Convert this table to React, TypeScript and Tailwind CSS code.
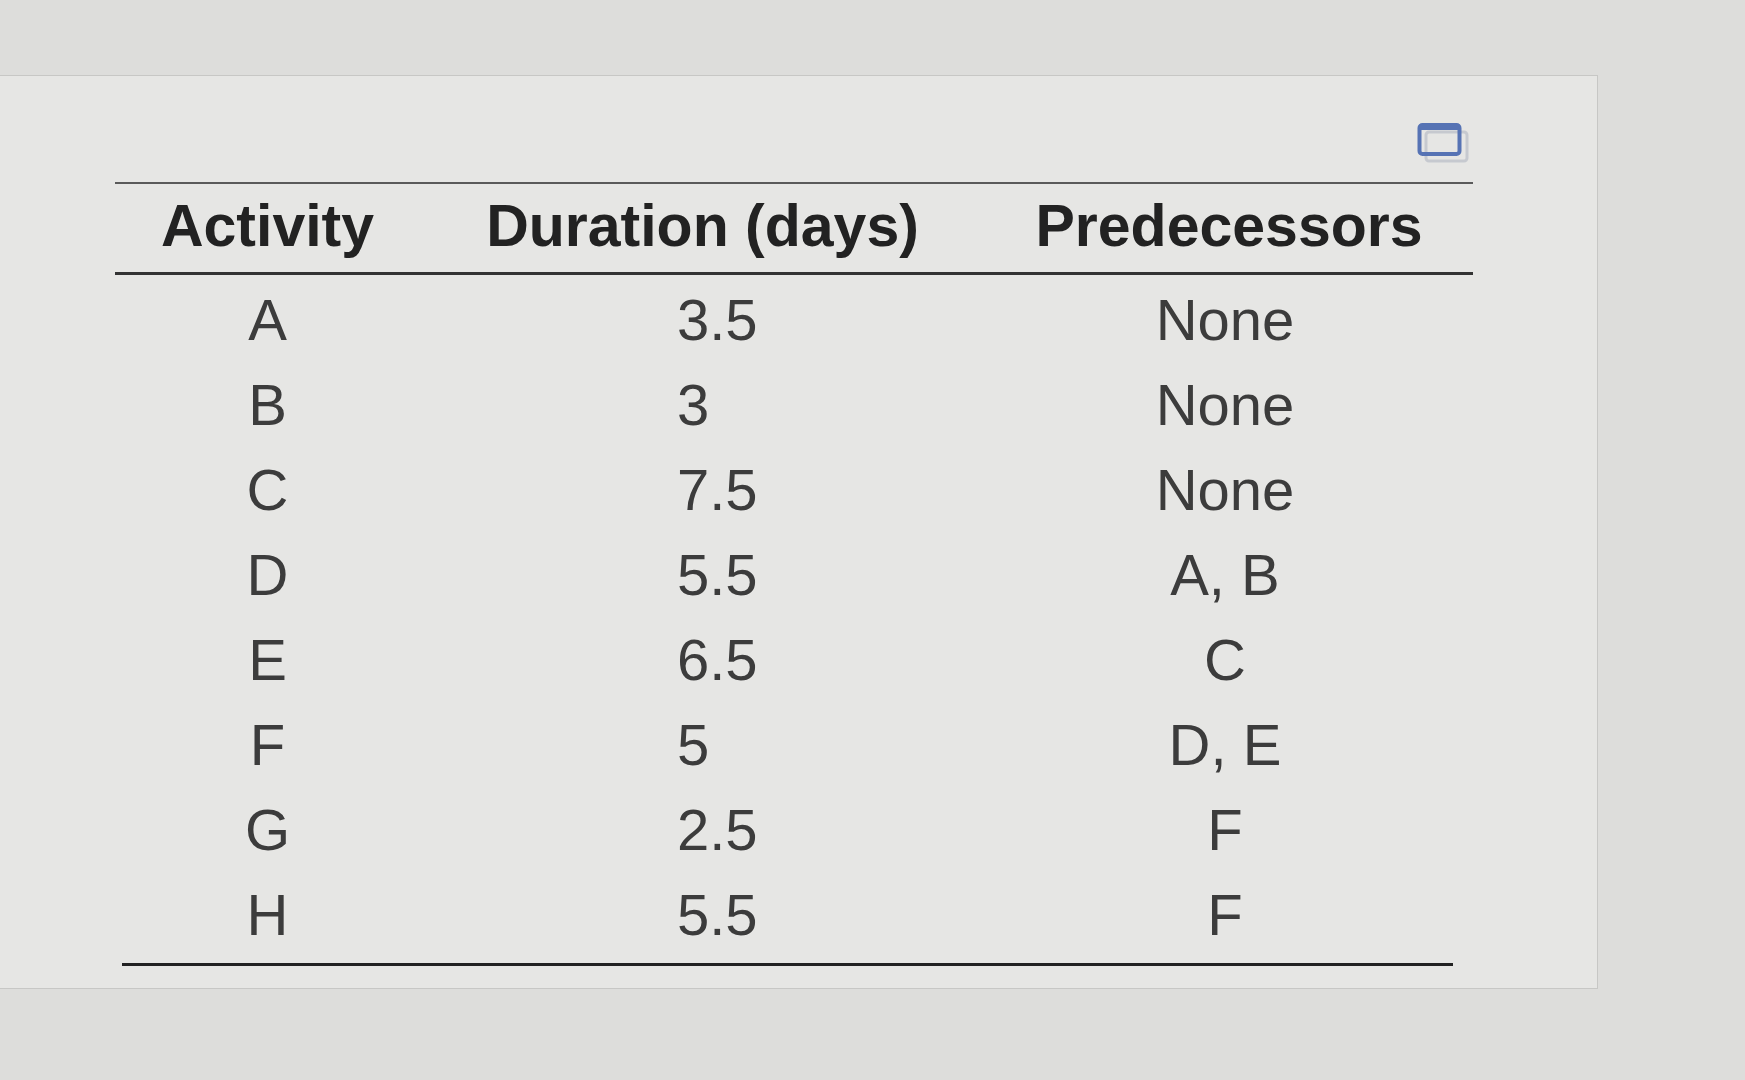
const ROWS: [string, string, string][] = [
  ['A', '3.5', 'None'],
  ['B', '3', 'None'],
  ['C', '7.5', 'None'],
  ['D', '5.5', 'A, B'],
  ['E', '6.5', 'C'],
  ['F', '5', 'D, E'],
  ['G', '2.5', 'F'],
  ['H', '5.5', 'F'],
];

function ExpandIcon() {
  return (
    <svg width="54" height="42" viewBox="0 0 54 42" className="block">
      <rect x="9" y="10" width="41" height="29" rx="3" fill="none" stroke="#c6c9cf" strokeWidth="3" />
      <rect x="2.5" y="3" width="40" height="29" rx="3" fill="none" stroke="#5673b4" strokeWidth="4" />
      <rect x="2" y="2" width="41" height="6" rx="2" fill="#5673b4" />
    </svg>
  );
}

export default function App() {
  return (
    <div
      className="w-full h-[1080px] overflow-hidden bg-[#dddddb] pt-[75px]"
      style={{ fontFamily: '"Liberation Sans", Arial, sans-serif' }}
    >
      <div className="w-[1598px] h-[914px] bg-[#e6e6e4] border-t border-r border-b border-[#c7c7c5]">
        <div className="flex justify-end pr-[126px] pt-[46px] h-[106px]">
          <ExpandIcon />
        </div>

        <div className="ml-[115px] w-[1358px]">
          <div className="h-[2px] bg-[#5a5a5a]" />

          <div className="grid grid-cols-[305px_565px_488px] pt-[12px] pb-[16px] text-[59px] leading-[60px] font-bold text-[#222]">
            <div className="text-center">Activity</div>
            <div className="text-center">Duration (days)</div>
            <div className="text-center">Predecessors</div>
          </div>

          <div className="h-[3px] bg-[#333]" />

          <div className="pt-[2px]">
            {ROWS.map(([act, dur, pred]) => (
              <div
                key={act}
                className="grid grid-cols-[305px_565px_488px] h-[85px] items-center text-[58px] leading-[85px] text-[#3c3c3c]"
              >
                <div className="text-center">{act}</div>
                <div className="pl-[257px]">{dur}</div>
                <div className="text-center pr-[8px]">{pred}</div>
              </div>
            ))}
          </div>

          <div className="mt-[6px] ml-[7px] w-[1331px] h-[3px] bg-[#222]" />
        </div>
      </div>
    </div>
  );
}
